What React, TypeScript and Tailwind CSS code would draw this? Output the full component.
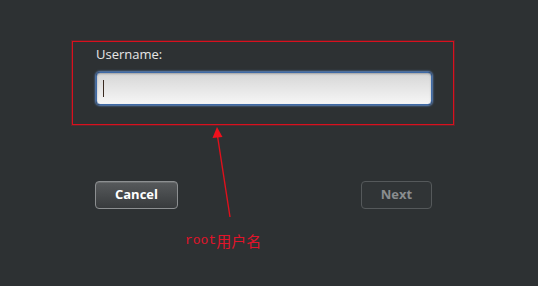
export default function App() {
  return (
    <div className="relative w-[538px] h-[286px] overflow-hidden bg-[#2d3133] font-['Open_Sans',sans-serif]">
      {/* Username field, boxed by the red annotation frame */}
      <div className="pl-[72px] pt-[41px]">
        <div className="w-[382px] h-[84px] border border-[#d8101e] shadow-[0_0_0_1px_rgba(200,16,30,0.3)] pl-[23px] pt-[4px]">
          <label className="block text-[13px] leading-[16px] text-[#e6e6e6]">Username:</label>
          <div className="mt-[10px] w-[336px] h-[33px] rounded-[4px] border border-[#3f6aa6] bg-gradient-to-b from-[#d6d6d6] via-[#e6e6e6] to-[#f6f6f6] shadow-[0_0_2px_1px_#5d84bd,inset_0_1px_2px_rgba(0,0,0,0.25)] flex items-center pl-[6px]">
            <div className="w-px h-[17px] bg-[#3a2a20]" />
          </div>
        </div>
      </div>

      {/* Buttons */}
      <div className="mt-[56px] pl-[95px] w-[432px] flex justify-between">
        <button className="w-[83px] h-[28px] rounded-[4px] border border-[#8c8f91] bg-gradient-to-b from-[#575a5c] to-[#383b3d] text-[13px] font-bold text-white shadow-[inset_0_1px_0_rgba(255,255,255,0.12)]">
          Cancel
        </button>
        <button className="w-[71px] h-[28px] rounded-[4px] border border-[#55595b] bg-[#303436] text-[13px] font-bold text-[#8a8d8f]">
          Next
        </button>
      </div>

      {/* Red annotation arrow */}
      <svg className="absolute left-0 top-0" width="538" height="286" viewBox="0 0 538 286">
        <line x1="230" y1="217" x2="217.5" y2="136" stroke="#e0101c" strokeWidth="1.4" />
        <polygon points="217,127 212.5,138 222.5,137" fill="#f0101c" />
      </svg>

      {/* Annotation text */}
      <div className="absolute left-[185px] top-[232px] flex items-end text-[#e0142a] leading-[18px]">
        <span className="font-['Liberation_Mono',monospace] text-[13px]">root</span>
        <span className="font-['Noto_Sans_CJK_SC',sans-serif] text-[15px]">用户名</span>
      </div>
    </div>
  );
}
